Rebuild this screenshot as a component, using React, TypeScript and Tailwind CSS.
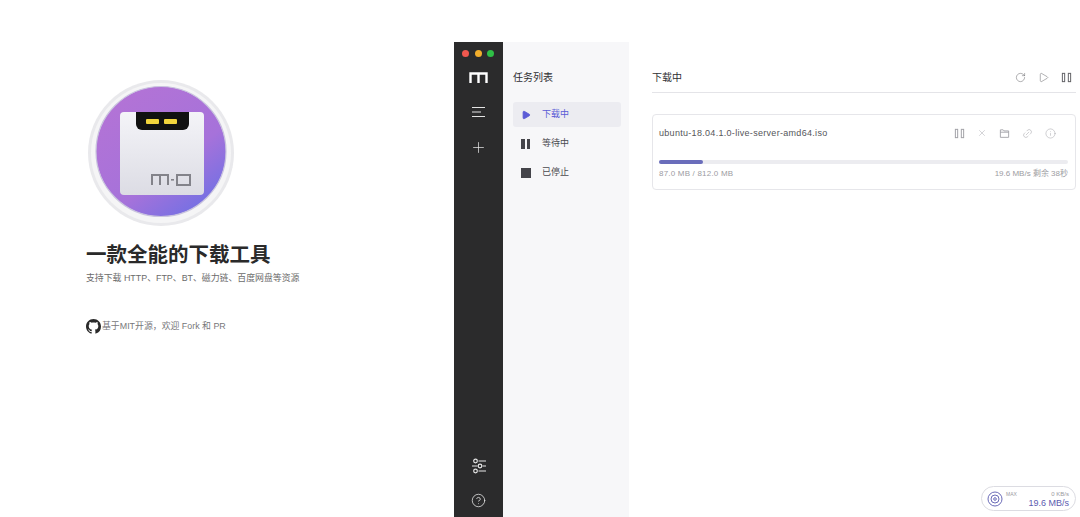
import { CircleHelp, Info, Link2, Play, Plus, RotateCw, X } from "lucide-react";

const font = { fontFamily: '"Liberation Sans", "Noto Sans CJK SC", sans-serif' };

const Logo = () => (
  <svg width="150" height="150" viewBox="0 0 150 150">
    <defs>
      <linearGradient id="disc" x1="0.2" y1="0.1" x2="0.85" y2="0.95">
        <stop offset="0" stopColor="#b273d6" />
        <stop offset="0.6" stopColor="#a672da" />
        <stop offset="1" stopColor="#7070e4" />
      </linearGradient>
      <linearGradient id="card" x1="0" y1="0" x2="0" y2="1">
        <stop offset="0" stopColor="#f4f4f8" />
        <stop offset="1" stopColor="#dcdce4" />
      </linearGradient>
    </defs>
    <circle cx="75" cy="74" r="73" fill="#e9e9ec" />
    <circle cx="75" cy="74" r="70" fill="#f5f5f6" />
    <circle cx="75" cy="72.5" r="65" fill="url(#disc)" stroke="#c9c4de" strokeWidth="1.2" />
    <rect x="34" y="33" width="84" height="83" rx="4" fill="url(#card)" />
    <path d="M50 33h53v12a6 6 0 0 1-6 6H56a6 6 0 0 1-6-6z" fill="#111" />
    <rect x="60" y="40" width="13" height="5" rx="1" fill="#f2d53c" />
    <rect x="78" y="40" width="13" height="5" rx="1" fill="#f2d53c" />
    <path d="M66 106v-10h16v10M74 96v10" fill="none" stroke="#83838a" strokeWidth="2" />
    <rect x="85" y="100" width="3" height="1.6" fill="#83838a" />
    <rect x="91" y="96" width="13" height="10" fill="none" stroke="#83838a" strokeWidth="2" />
  </svg>
);

const Github = () => (
  <svg width="15" height="15" viewBox="0 0 16 16" fill="#2a2a2a">
    <path d="M8 0C3.58 0 0 3.58 0 8c0 3.54 2.29 6.53 5.47 7.59.4.07.55-.17.55-.38 0-.19-.01-.82-.01-1.49-2.01.37-2.53-.49-2.69-.94-.09-.23-.48-.94-.82-1.13-.28-.15-.68-.52-.01-.53.63-.01 1.08.58 1.23.82.72 1.21 1.87.87 2.33.66.07-.52.28-.87.51-1.07-1.78-.2-3.64-.89-3.64-3.95 0-.87.31-1.59.82-2.15-.08-.2-.36-1.02.08-2.12 0 0 .67-.21 2.2.82.64-.18 1.32-.27 2-.27s1.36.09 2 .27c1.53-1.04 2.2-.82 2.2-.82.44 1.1.16 1.92.08 2.12.51.56.82 1.27.82 2.15 0 3.07-1.87 3.75-3.65 3.95.29.25.54.73.54 1.48 0 1.07-.01 1.93-.01 2.2 0 .21.15.46.55.38A8.01 8.01 0 0 0 16 8c0-4.42-3.58-8-8-8z" />
  </svg>
);

const Bars = ({ color = "#9a9aa0" }: { color?: string }) => (
  <svg width="11" height="11" viewBox="0 0 12 12" fill="none" stroke={color} strokeWidth="1">
    <path d="M1.5 1v10M4 1v10M8 1v10M10.5 1v10M1.5 1.5H4M8 1.5h2.5M1.5 10.5H4M8 10.5h2.5" />
  </svg>
);

const Folder = () => (
  <svg width="11" height="11" viewBox="0 0 12 12" fill="none" stroke="#9a9aa0" strokeWidth="0.9">
    <path d="M1.5 2h3l1 1.2h5v7h-9zM1.5 4.6h9" />
  </svg>
);

const Sliders = () => (
  <svg width="16" height="16" viewBox="0 0 16 16" fill="none" stroke="#e8e8e8" strokeWidth="1.2">
    <circle cx="4.5" cy="3" r="1.8" />
    <circle cx="9" cy="8" r="1.8" />
    <circle cx="4.5" cy="13" r="1.8" />
    <path d="M7.5 3H15M1 8h5.5M11.5 8H15M7.5 13H15" />
  </svg>
);

const MLogo = () => (
  <svg width="19" height="11" viewBox="0 0 19 11" fill="none" stroke="#fff" strokeWidth="2.4">
    <path d="M1.5 11V1.5h16V11M9.5 1.5V11" />
  </svg>
);

const MenuLines = () => (
  <svg width="15" height="12" viewBox="0 0 15 12" fill="none" stroke="#e4e4e4" strokeWidth="1">
    <path d="M1 1.5h13M1 6h9M1 10.5h13" />
  </svg>
);

const NavRow = ({ icon, label, active }: { icon: React.ReactNode; label: string; active?: boolean }) => (
  <div className={`flex h-[25px] items-center rounded-[3px] pl-[8px] ${active ? "bg-[#ececf1] text-[#5b5bd6]" : "text-[#4a4a4f]"}`}>
    <span className="flex w-[21px] items-center">{icon}</span>
    <span className="text-[9px]">{label}</span>
  </div>
);

export default function App() {
  return (
    <div className="flex h-[517px] w-[1080px] overflow-hidden bg-white" style={font}>
      <div className="w-[454px] shrink-0 pl-[86px] pt-[79px]">
        <Logo />
        <h1 className="mt-[10px] text-[20.5px] leading-[32px] font-bold text-[#2a2a2a]">一款全能的下载工具</h1>
        <p className="text-[8.9px] leading-[14px] text-[#6b6b6b]">支持下载 HTTP、FTP、BT、磁力链、百度网盘等资源</p>
        <div className="mt-[34px] flex items-center gap-[1px] text-[8.9px] text-[#77777a]">
          <Github />
          <span>基于MIT开源，欢迎 Fork 和 PR</span>
        </div>
      </div>

      <div className="mt-[42px] flex h-[475px] flex-1">
        <div className="flex w-[49px] shrink-0 flex-col items-center bg-[#2b2b2c] pb-[9px]">
          <div className="flex w-full gap-[5.5px] pl-[8px] pt-[8px]">
            <span className="h-[7px] w-[7px] rounded-full bg-[#f0584f]" />
            <span className="h-[7px] w-[7px] rounded-full bg-[#f2ae2c]" />
            <span className="h-[7px] w-[7px] rounded-full bg-[#2fbf46]" />
          </div>
          <div className="mt-[15px]">
            <MLogo />
          </div>
          <div className="mt-[23px]">
            <MenuLines />
          </div>
          <Plus className="mt-[21px]" size={17} strokeWidth={1} color="#eee" />
          <div className="mt-auto">
            <Sliders />
          </div>
          <CircleHelp className="mt-[19px]" size={15} strokeWidth={1.2} color="#eee" />
        </div>

        <div className="w-[126px] shrink-0 bg-[#f7f7f9] px-[10px]">
          <h2 className="mt-[29px] text-[10px] leading-[14px] text-[#2f2f33]">任务列表</h2>
          <div className="mt-[17px] flex w-[108px] flex-col gap-[4px]">
            <NavRow active label="下载中" icon={<Play size={10} fill="#5b5bd6" color="#5b5bd6" />} />
            <NavRow label="等待中" icon={<span className="flex gap-[2px]"><span className="h-[10px] w-[3.5px] bg-[#44444a]" /><span className="h-[10px] w-[3.5px] bg-[#44444a]" /></span>} />
            <NavRow label="已停止" icon={<span className="h-[10px] w-[10px] bg-[#44444a]" />} />
          </div>
        </div>

        <div className="flex-1 pl-[23px] pr-[4px]">
          <div className="flex h-[51px] items-start justify-between border-b border-[#e4e4e8] pt-[27px]">
            <h2 className="text-[10px] leading-[18px] text-[#2f2f33]">下载中</h2>
            <div className="flex h-[16px] items-center gap-[12px] pr-[4px] text-[#55555a]">
              <RotateCw size={11} strokeWidth={1} />
              <Play size={11} strokeWidth={1} />
              <Bars color="#55555a" />
            </div>
          </div>
          <div className="mt-[21px] h-[76px] rounded-[4px] border border-[#e6e6ea] px-[6px] pt-[12px]">
            <div className="flex items-center justify-between pr-[13px]">
              <span className="text-[9px] leading-[12px] tracking-[0.3px] text-[#55555a]">ubuntu-18.04.1.0-live-server-amd64.iso</span>
              <div className="flex items-center gap-[12px] text-[#9a9aa0]">
                <Bars />
                <X size={10} strokeWidth={1} />
                <Folder />
                <Link2 size={11} strokeWidth={1} className="-rotate-45" />
                <Info size={11} strokeWidth={1} />
              </div>
            </div>
            <div className="mt-[21px] h-[3.5px] w-[409px] rounded-full bg-[#ececf0]">
              <div className="h-full w-[44px] rounded-full bg-[#6a6dbb]" />
            </div>
            <div className="mt-[4px] flex w-[409px] justify-between text-[8px] leading-[12px] text-[#9c9ca2]">
              <span className="tracking-[0.2px]">87.0 MB / 812.0 MB</span>
              <span>19.6 MB/s 剩余 38秒</span>
            </div>
          </div>
        </div>
      </div>

      <div className="absolute left-[981px] top-[486px] flex h-[25px] w-[95px] items-center rounded-full border border-[#dcdce2] bg-white pl-[5px] pr-[6px]">
        <svg width="16" height="16" viewBox="0 0 16 16" fill="none" stroke="#5b5bb0" strokeWidth="0.9">
          <circle cx="8" cy="8" r="7" />
          <circle cx="8" cy="8" r="4" />
          <circle cx="8" cy="8" r="1.3" />
        </svg>
        <span className="mb-[9px] ml-[3px] text-[5px] leading-[6px] text-[#9a9aa0]">MAX</span>
        <div className="ml-auto flex flex-col items-end">
          <span className="text-[6px] leading-[8px] text-[#9a9aa0]">0 KB/s</span>
          <span className="text-[9px] leading-[10px] text-[#5b5bb0]">19.6 MB/s</span>
        </div>
      </div>
    </div>
  );
}
